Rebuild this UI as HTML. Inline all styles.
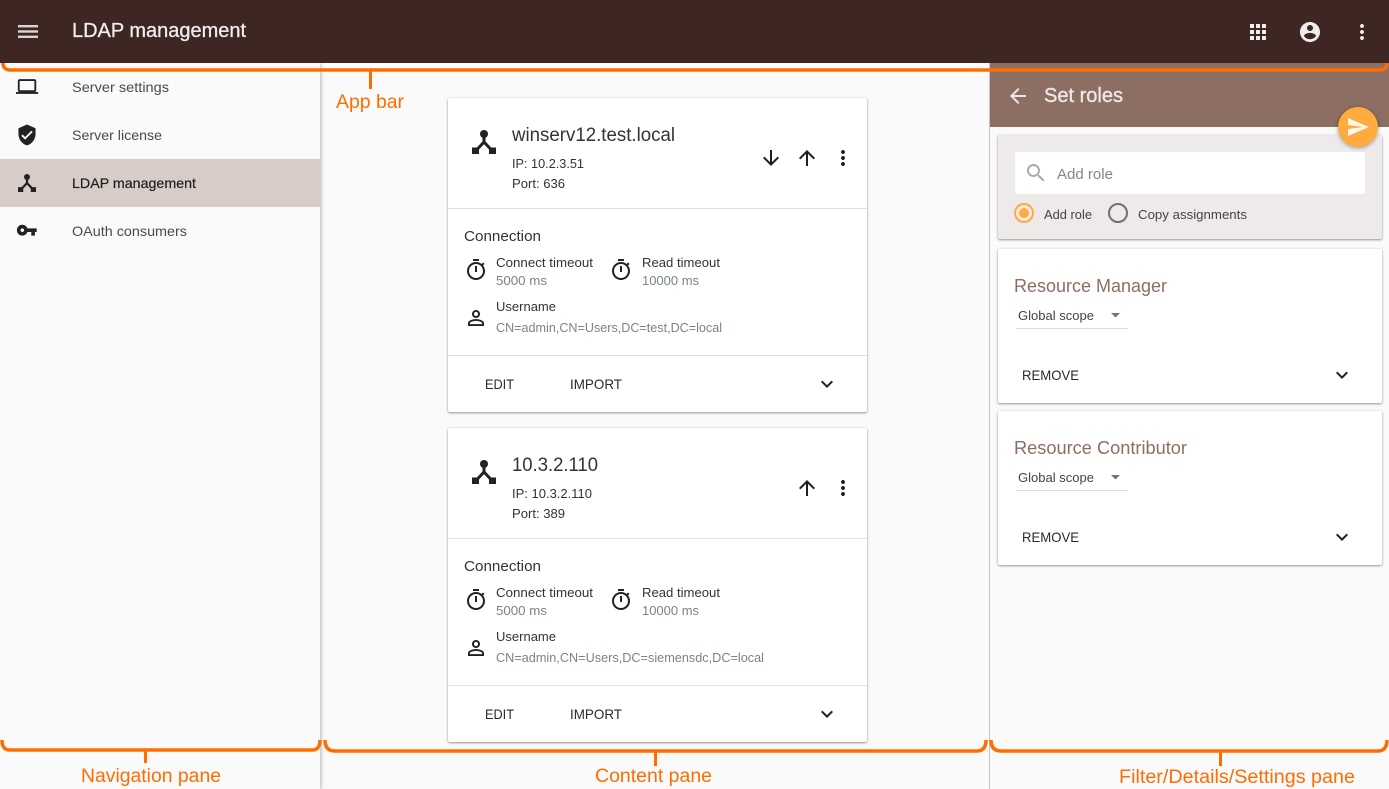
<!DOCTYPE html>
<html lang="en">
<head>
<meta charset="utf-8">
<title>LDAP management</title>
<style>
html,body{margin:0;padding:0;width:1389px;height:789px;overflow:hidden;background:#fafafa;font-family:"Liberation Sans",sans-serif}
.b{position:absolute;box-sizing:border-box}
.card{background:#fff;border-radius:2px;box-shadow:0 1px 2px rgba(0,0,0,.38),0 0 3px rgba(0,0,0,.08)}
svg{position:absolute;left:0;top:0}
text{font-family:"Liberation Sans",sans-serif;white-space:pre}
.nav{font-size:14px;fill:#4a4a4a}
.sm{font-size:13px;fill:#333}
.gr{font-size:13px;fill:#78848a}
.btn{font-size:14px;fill:#2a2a2a}
.rt{font-size:18px;fill:#8d6e63}
.an{font-size:19px;fill:#ff6d00}
.org{fill:none;stroke:#ff6d00;stroke-width:3.5}
</style>
</head>
<body>
<div class="b" style="left:0;top:63px;width:975px;height:6px;background:#fff"></div>
<div class="b" style="left:0;top:63px;width:320px;height:726px;background:#fafafa;box-shadow:1px 0 4px rgba(0,0,0,.28)"></div>
<div class="b" style="left:0;top:159px;width:320px;height:48px;background:#d7ccc8"></div>
<div class="b" style="left:989px;top:63px;width:1px;height:726px;background:#c4c4c4"></div>
<div class="b" style="left:990px;top:63px;width:399px;height:64px;background:#8d6e63"></div>
<div class="b" style="left:0;top:0;width:1389px;height:63px;background:#3e2723"></div>

<div class="b card" style="left:448px;top:98px;width:419px;height:314px"></div>
<div class="b card" style="left:448px;top:428px;width:419px;height:314px"></div>
<div class="b card" style="left:998px;top:135px;width:384px;height:104px;background:#eeeae9"></div>
<div class="b" style="left:1015px;top:152px;width:350px;height:42px;background:#fff;border-radius:2px"></div>
<div class="b card" style="left:998px;top:249px;width:384px;height:154px"></div>
<div class="b card" style="left:998px;top:411px;width:384px;height:154px"></div>
<div class="b" style="left:1338px;top:107px;width:40px;height:40px;border-radius:50%;background:#ffab40;box-shadow:0 1px 4px rgba(0,0,0,.35)"></div>

<svg width="1389" height="789" viewBox="0 0 1389 789" xmlns="http://www.w3.org/2000/svg">
<defs>
<symbol id="more" viewBox="0 0 24 24"><path d="M12 8c1.1 0 2-.9 2-2s-.9-2-2-2-2 .9-2 2 .9 2 2 2zm0 2c-1.1 0-2 .9-2 2s.9 2 2 2 2-.9 2-2-.9-2-2-2zm0 6c-1.1 0-2 .9-2 2s.9 2 2 2 2-.9 2-2-.9-2-2-2z"/></symbol>
<symbol id="down" viewBox="0 0 24 24"><path d="M20 12l-1.41-1.41L13 16.17V4h-2v12.17l-5.58-5.59L4 12l8 8 8-8z"/></symbol>
<symbol id="up" viewBox="0 0 24 24"><path d="M4 12l1.41 1.41L11 7.83V20h2V7.83l5.58 5.59L20 12l-8-8-8 8z"/></symbol>
<symbol id="chev" viewBox="0 0 24 24"><path d="M16.59 8.59L12 13.17 7.41 8.59 6 10l6 6 6-6z"/></symbol>
<symbol id="timer" viewBox="0 0 24 24"><path d="M15 1H9v2h6V1zm-4 13h2V8h-2v6zm8.03-6.61l1.42-1.42c-.43-.51-.9-.99-1.41-1.41l-1.42 1.42C16.07 4.74 14.12 4 12 4c-4.97 0-9 4.03-9 9s4.02 9 9 9 9-4.03 9-9c0-2.12-.74-4.07-1.97-5.61zM12 20c-3.87 0-7-3.13-7-7s3.13-7 7-7 7 3.13 7 7-3.13 7-7 7z"/></symbol>
<symbol id="person" viewBox="0 0 24 24"><path d="M12 5.9c1.16 0 2.1.94 2.1 2.1s-.94 2.1-2.1 2.1S9.9 9.16 9.9 8s.94-2.1 2.1-2.1m0 9c2.97 0 6.1 1.46 6.1 2.1v1.1H5.9V17c0-.64 3.13-2.1 6.1-2.1M12 4C9.79 4 8 5.79 8 8s1.79 4 4 4 4-1.79 4-4-1.79-4-4-4zm0 9c-2.67 0-8 1.34-8 4v3h16v-3c0-2.66-5.33-4-8-4z"/></symbol>
<symbol id="ldap" viewBox="0 0 24 24"><circle cx="12" cy="4" r="4"/><path d="M12 6V12L5 19.5M12 12L19 19.5" fill="none" stroke="currentColor" stroke-width="3"/><rect x="0" y="17.5" width="7" height="6.5"/><rect x="17" y="17.5" width="7" height="6.5"/></symbol>
</defs>

<!-- App bar -->
<g fill="#d9d6d5"><rect x="18" y="25" width="20" height="2.4"/><rect x="18" y="30.3" width="20" height="2.4"/><rect x="18" y="35.6" width="20" height="2.4"/></g>
<text x="72" y="37" font-size="20" fill="#f0eeed" stroke="#f0eeed" stroke-width=".3" textLength="174" lengthAdjust="spacingAndGlyphs">LDAP management</text>
<g fill="#f0eeed">
<path transform="translate(1246 20)" d="M4 8h4V4H4v4zm6 12h4v-4h-4v4zm-6 0h4v-4H4v4zm0-6h4v-4H4v4zm6 0h4v-4h-4v4zm6-10v4h4V4h-4zm-6 4h4V4h-4v4zm6 6h4v-4h-4v4zm0 6h4v-4h-4v4z"/>
<path transform="translate(1298 20)" d="M12 2C6.48 2 2 6.48 2 12s4.48 10 10 10 10-4.48 10-10S17.52 2 12 2zm0 3c1.66 0 3 1.34 3 3s-1.34 3-3 3-3-1.34-3-3 1.34-3 3-3zm0 14.2c-2.5 0-4.71-1.28-6-3.22.03-1.99 4-3.08 6-3.08 1.99 0 5.97 1.09 6 3.08-1.29 1.94-3.5 3.22-6 3.22z"/>
<use href="#more" x="1350" y="20" width="24" height="24"/>
</g>

<!-- Navigation -->
<g fill="#222" color="#222">
<path transform="translate(16 75.5) scale(.92)" d="M20 18c1.1 0 1.99-.9 1.99-2L22 6c0-1.1-.9-2-2-2H4c-1.1 0-2 .9-2 2v10c0 1.1.9 2 2 2H0v2h24v-2h-4zM4 6h16v10H4V6z"/>
<path transform="translate(15.6 123.5) scale(.95)" d="M12 1L3 5v6c0 5.55 3.84 10.74 9 12 5.16-1.26 9-6.45 9-12V5l-9-4zm-2 16l-4-4 1.41-1.41L10 14.17l6.59-6.59L18 9l-8 8z"/>
<use href="#ldap" x="18" y="174" width="18" height="18"/>
<path transform="translate(16 219.4) scale(.9)" d="M12.65 10C11.83 7.67 9.61 6 7 6c-3.31 0-6 2.69-6 6s2.69 6 6 6c2.61 0 4.83-1.67 5.65-4H17v4h4v-4h2v-4H12.65zM7 14c-1.1 0-2-.9-2-2s.9-2 2-2 2 .9 2 2-.9 2-2 2z"/>
</g>
<text class="nav" x="72" y="92" textLength="97" lengthAdjust="spacingAndGlyphs">Server settings</text>
<text class="nav" x="72" y="140" textLength="90" lengthAdjust="spacingAndGlyphs">Server license</text>
<text class="nav" x="72" y="188" style="fill:#1e1e1e" stroke="#1e1e1e" stroke-width=".2" textLength="124" lengthAdjust="spacingAndGlyphs">LDAP management</text>
<text class="nav" x="72" y="236" textLength="115" lengthAdjust="spacingAndGlyphs">OAuth consumers</text>

<!-- Content card 1 -->
<g id="c1" color="#222">
<use href="#ldap" x="472" y="130" width="24" height="24" fill="#222"/>
<text x="512" y="141" font-size="19" fill="#333" textLength="163" lengthAdjust="spacingAndGlyphs">winserv12.test.local</text>
<text class="sm" x="512" y="168" textLength="72" lengthAdjust="spacingAndGlyphs">IP: 10.2.3.51</text>
<text class="sm" x="512" y="188" textLength="53" lengthAdjust="spacingAndGlyphs">Port: 636</text>
<use href="#down" x="759" y="146" width="24" height="24" fill="#1e1e1e"/>
<use href="#up" x="795" y="146" width="24" height="24" fill="#1e1e1e"/>
<use href="#more" x="831" y="146" width="24" height="24" fill="#1e1e1e"/>
<rect x="448" y="208" width="419" height="1" fill="#e0e0e0"/>
<text x="464" y="241" font-size="14.5" fill="#333" textLength="77" lengthAdjust="spacingAndGlyphs">Connection</text>
<use href="#timer" x="464" y="258" width="24" height="24" fill="#222"/>
<use href="#timer" x="609" y="258" width="24" height="24" fill="#222"/>
<text class="sm" x="496" y="267" textLength="97" lengthAdjust="spacingAndGlyphs">Connect timeout</text>
<text class="gr" x="496" y="285" textLength="51" lengthAdjust="spacingAndGlyphs">5000 ms</text>
<text class="sm" x="642" y="267" textLength="78" lengthAdjust="spacingAndGlyphs">Read timeout</text>
<text class="gr" x="642" y="285" textLength="57" lengthAdjust="spacingAndGlyphs">10000 ms</text>
<use href="#person" x="464" y="306" width="24" height="24" fill="#222"/>
<text class="sm" x="496" y="311" textLength="60" lengthAdjust="spacingAndGlyphs">Username</text>
<text class="gr" x="496" y="332" textLength="226" lengthAdjust="spacingAndGlyphs">CN=admin,CN=Users,DC=test,DC=local</text>
<rect x="448" y="355" width="419" height="1" fill="#e0e0e0"/>
<text class="btn" x="485" y="389" textLength="29" lengthAdjust="spacingAndGlyphs">EDIT</text>
<text class="btn" x="570" y="389" textLength="52" lengthAdjust="spacingAndGlyphs">IMPORT</text>
<use href="#chev" x="815" y="372" width="24" height="24" fill="#222"/>
</g>

<!-- Content card 2 -->
<g transform="translate(0 330)" color="#222">
<use href="#ldap" x="472" y="130" width="24" height="24" fill="#222"/>
<text x="512" y="141" font-size="19" fill="#333" textLength="86" lengthAdjust="spacingAndGlyphs">10.3.2.110</text>
<text class="sm" x="512" y="168" textLength="80" lengthAdjust="spacingAndGlyphs">IP: 10.3.2.110</text>
<text class="sm" x="512" y="188" textLength="53" lengthAdjust="spacingAndGlyphs">Port: 389</text>
<use href="#up" x="795" y="146" width="24" height="24" fill="#1e1e1e"/>
<use href="#more" x="831" y="146" width="24" height="24" fill="#1e1e1e"/>
<rect x="448" y="208" width="419" height="1" fill="#e0e0e0"/>
<text x="464" y="241" font-size="14.5" fill="#333" textLength="77" lengthAdjust="spacingAndGlyphs">Connection</text>
<use href="#timer" x="464" y="258" width="24" height="24" fill="#222"/>
<use href="#timer" x="609" y="258" width="24" height="24" fill="#222"/>
<text class="sm" x="496" y="267" textLength="97" lengthAdjust="spacingAndGlyphs">Connect timeout</text>
<text class="gr" x="496" y="285" textLength="51" lengthAdjust="spacingAndGlyphs">5000 ms</text>
<text class="sm" x="642" y="267" textLength="78" lengthAdjust="spacingAndGlyphs">Read timeout</text>
<text class="gr" x="642" y="285" textLength="57" lengthAdjust="spacingAndGlyphs">10000 ms</text>
<use href="#person" x="464" y="306" width="24" height="24" fill="#222"/>
<text class="sm" x="496" y="311" textLength="60" lengthAdjust="spacingAndGlyphs">Username</text>
<text class="gr" x="496" y="332" textLength="268" lengthAdjust="spacingAndGlyphs">CN=admin,CN=Users,DC=siemensdc,DC=local</text>
<rect x="448" y="355" width="419" height="1" fill="#e0e0e0"/>
<text class="btn" x="485" y="389" textLength="29" lengthAdjust="spacingAndGlyphs">EDIT</text>
<text class="btn" x="570" y="389" textLength="52" lengthAdjust="spacingAndGlyphs">IMPORT</text>
<use href="#chev" x="815" y="372" width="24" height="24" fill="#222"/>
</g>

<!-- Right pane -->
<path transform="translate(1006 84)" fill="#ece7e5" d="M20 11H7.83l5.59-5.59L12 4l-8 8 8 8 1.41-1.41L7.83 13H20v-2z"/>
<text x="1044" y="102" font-size="20" fill="#ece7e5" stroke="#ece7e5" stroke-width=".4" textLength="79" lengthAdjust="spacingAndGlyphs">Set roles</text>
<path transform="translate(1346 115)" fill="#fff6e9" d="M2.01 21L23 12 2.01 3 2 10l15 2-15 2z"/>
<path transform="translate(1024 161)" fill="#aaa" d="M15.5 14h-.79l-.28-.27C15.41 12.59 16 11.11 16 9.5 16 5.91 13.09 3 9.5 3S3 5.91 3 9.5 5.91 16 9.5 16c1.61 0 3.09-.59 4.23-1.57l.27.28v.79l5 4.99L20.49 19l-4.99-5zm-6 0C7.01 14 5 11.99 5 9.5S7.01 5 9.5 5 14 7.01 14 9.5 11.99 14 9.5 14z"/>
<text x="1057" y="179" font-size="15" fill="#858585" textLength="56" lengthAdjust="spacingAndGlyphs">Add role</text>
<circle cx="1024" cy="213" r="9" fill="none" stroke="#ffab40" stroke-width="2"/>
<circle cx="1024" cy="213" r="5" fill="#ffab40"/>
<circle cx="1118" cy="213" r="9" fill="none" stroke="#6f6f6f" stroke-width="2"/>
<text class="sm" x="1044" y="219" style="fill:#444" textLength="48" lengthAdjust="spacingAndGlyphs">Add role</text>
<text class="sm" x="1138" y="219" style="fill:#444" textLength="109" lengthAdjust="spacingAndGlyphs">Copy assignments</text>

<text class="rt" x="1014" y="292" textLength="153" lengthAdjust="spacingAndGlyphs">Resource Manager</text>
<text class="sm" x="1018" y="320" style="fill:#444" textLength="76" lengthAdjust="spacingAndGlyphs">Global scope</text>
<path d="M1111 313h9l-4.5 4.5z" fill="#757575"/>
<rect x="1016" y="328" width="112" height="1" fill="#dcdcdc"/>
<text class="btn" x="1022" y="380" textLength="57" lengthAdjust="spacingAndGlyphs">REMOVE</text>
<use href="#chev" x="1330" y="363" width="24" height="24" fill="#222"/>

<text class="rt" x="1014" y="454" textLength="173" lengthAdjust="spacingAndGlyphs">Resource Contributor</text>
<text class="sm" x="1018" y="482" style="fill:#444" textLength="76" lengthAdjust="spacingAndGlyphs">Global scope</text>
<path d="M1111 475h9l-4.5 4.5z" fill="#757575"/>
<rect x="1016" y="490" width="112" height="1" fill="#dcdcdc"/>
<text class="btn" x="1022" y="542" textLength="57" lengthAdjust="spacingAndGlyphs">REMOVE</text>
<use href="#chev" x="1330" y="525" width="24" height="24" fill="#222"/>

<!-- Annotations -->
<path class="org" d="M3 63C3 68 6 70 10 70H1380C1384 70 1387 68 1387 63"/>
<rect x="369" y="71" width="3" height="18" fill="#ff6d00"/>
<text class="an" x="336" y="108" textLength="68" lengthAdjust="spacingAndGlyphs">App bar</text>

<path class="org" d="M2 740C2 746 4 750 10 750H312C318 750 320 746 320 740"/>
<rect x="144" y="751" width="3" height="12" fill="#ff6d00"/>
<text class="an" x="81" y="782" textLength="140" lengthAdjust="spacingAndGlyphs">Navigation pane</text>

<path class="org" d="M325 740C325 747 328 751 335 751H977C983 751 986 747 986 740"/>
<rect x="654" y="752" width="3" height="14" fill="#ff6d00"/>
<text class="an" x="595" y="782" textLength="117" lengthAdjust="spacingAndGlyphs">Content pane</text>

<path class="org" d="M991 740C991 747 994 751 1001 751H1378C1384 751 1387 747 1387 740"/>
<rect x="1219" y="752" width="3" height="14" fill="#ff6d00"/>
<text class="an" x="1119" y="783" textLength="236" lengthAdjust="spacingAndGlyphs">Filter/Details/Settings pane</text>
</svg>
</body>
</html>
